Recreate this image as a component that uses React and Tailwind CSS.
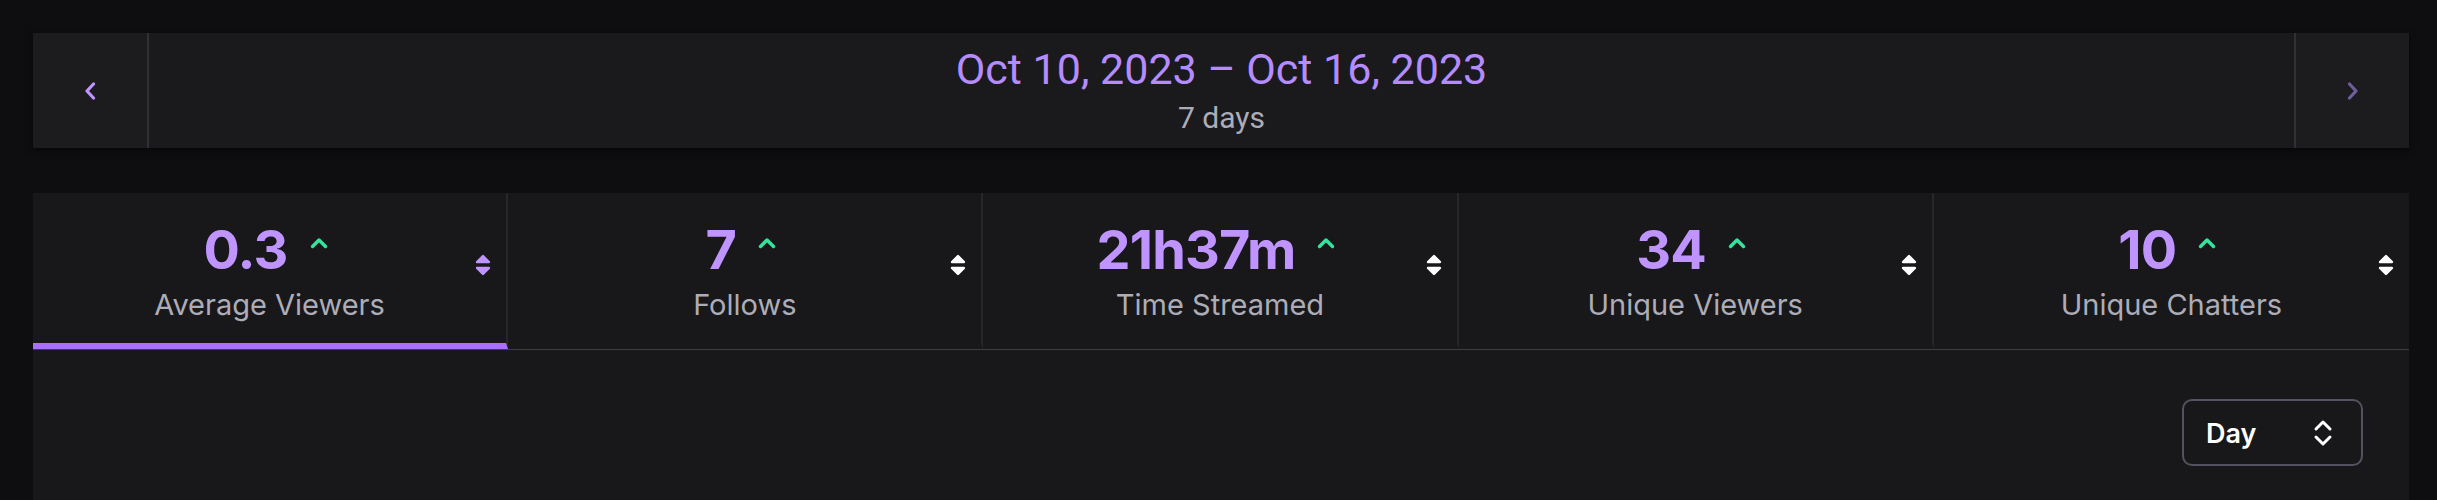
import React, { useState } from 'react'

const stats = [
  { value: '0.3', label: 'Average Viewers' },
  { value: '7', label: 'Follows' },
  { value: '21h37m', label: 'Time Streamed' },
  { value: '34', label: 'Unique Viewers' },
  { value: '10', label: 'Unique Chatters' },
]

function Chevron({ dir = 'left', className = '' }) {
  const d = dir === 'left' ? 'M9.5 2 L3 9 L9.5 16' : 'M2.5 2 L9 9 L2.5 16'
  return (
    <svg width="12" height="18" viewBox="0 0 12 18" className={className}>
      <path d={d} fill="none" stroke="currentColor" strokeWidth="3.2" strokeLinecap="round" strokeLinejoin="round" />
    </svg>
  )
}

function TrendUp() {
  return (
    <svg width="18" height="12" viewBox="0 0 18 12" className="text-[#36e39c]">
      <path d="M2.5 9.5 L9 3 L15.5 9.5" fill="none" stroke="currentColor" strokeWidth="3.4" strokeLinecap="round" strokeLinejoin="round" />
    </svg>
  )
}

function SortIcon({ className = '' }) {
  return (
    <svg width="18" height="26" viewBox="0 0 18 26" className={className}>
      <path d="M3 10 L9 4 L15 10 Z" fill="currentColor" stroke="currentColor" strokeWidth="2.4" strokeLinejoin="round" />
      <path d="M3 16 L9 22 L15 16 Z" fill="currentColor" stroke="currentColor" strokeWidth="2.4" strokeLinejoin="round" />
    </svg>
  )
}

function UpDown() {
  return (
    <svg width="20" height="28" viewBox="0 0 20 28" className="text-white">
      <path d="M3 10 L10 3 L17 10" fill="none" stroke="currentColor" strokeWidth="3" strokeLinecap="round" strokeLinejoin="round" />
      <path d="M3 18 L10 25 L17 18" fill="none" stroke="currentColor" strokeWidth="3" strokeLinecap="round" strokeLinejoin="round" />
    </svg>
  )
}

export default function App() {
  const [active, setActive] = useState(0)

  return (
    <div className="h-[500px] overflow-hidden bg-[#0e0e10] pl-[33px] pr-[28px] pt-[33px] font-['Inter',sans-serif]">
      {/* date range */}
      <div className="flex h-[115px] bg-[#1a1a1d] shadow-[0_2px_6px_rgba(0,0,0,0.6)]">
        <button className="flex w-[116px] items-center justify-center border-r-2 border-[#303035] bg-[#1c1c1f] text-[#bf94ff]">
          <Chevron dir="left" />
        </button>
        <div className="flex flex-1 flex-col items-center justify-center font-['Roboto',sans-serif]">
          <div className="text-[43px] leading-none text-[#b48cff]">Oct 10, 2023 – Oct 16, 2023</div>
          <div className="mt-[12px] text-[30px] leading-none text-[#adadb8]">7 days</div>
        </div>
        <button className="flex w-[115px] items-center justify-center border-l-2 border-[#303035] bg-[#1c1c1f] text-[#6f5d9c]">
          <Chevron dir="right" />
        </button>
      </div>

      {/* stats */}
      <div className="mt-[45px] h-[400px] bg-[#18181b]">
        <div className="grid grid-cols-5 border-b border-[#3d3d42]">
          {stats.map((s, i) => (
            <button
              key={s.label}
              onClick={() => setActive(i)}
              className={
                'relative flex h-[156px] flex-col items-center border-b-[6px] pt-[30px] ' +
                (i < stats.length - 1 ? 'border-r-2 border-r-[#26262b] ' : '') +
                (i === active ? 'border-b-[#a970ff]' : 'border-b-transparent')
              }
            >
              <div className="flex items-center gap-[22px] pr-[8px]">
                <span className="text-[54px] font-bold leading-none tracking-[-0.8px] text-[#bf94ff]">{s.value}</span>
                <span className="mb-[14px]"><TrendUp /></span>
              </div>
              <div className="mt-[10px] text-[29px] leading-[36px] text-[#adadb8]">{s.label}</div>
              <span className="absolute right-[14px] top-[59px]">
                <SortIcon className={i === active ? 'text-[#bf94ff]' : 'text-white'} />
              </span>
            </button>
          ))}
        </div>
        <div className="flex justify-end pr-[46px] pt-[49px]">
          <button className="flex h-[67px] w-[181px] items-center justify-between rounded-[10px] border-2 border-[#53535f] pl-[22px] pr-[28px]">
            <span className="mt-[4px] text-[27px] font-semibold text-white">Day</span>
            <UpDown />
          </button>
        </div>
      </div>
    </div>
  )
}
